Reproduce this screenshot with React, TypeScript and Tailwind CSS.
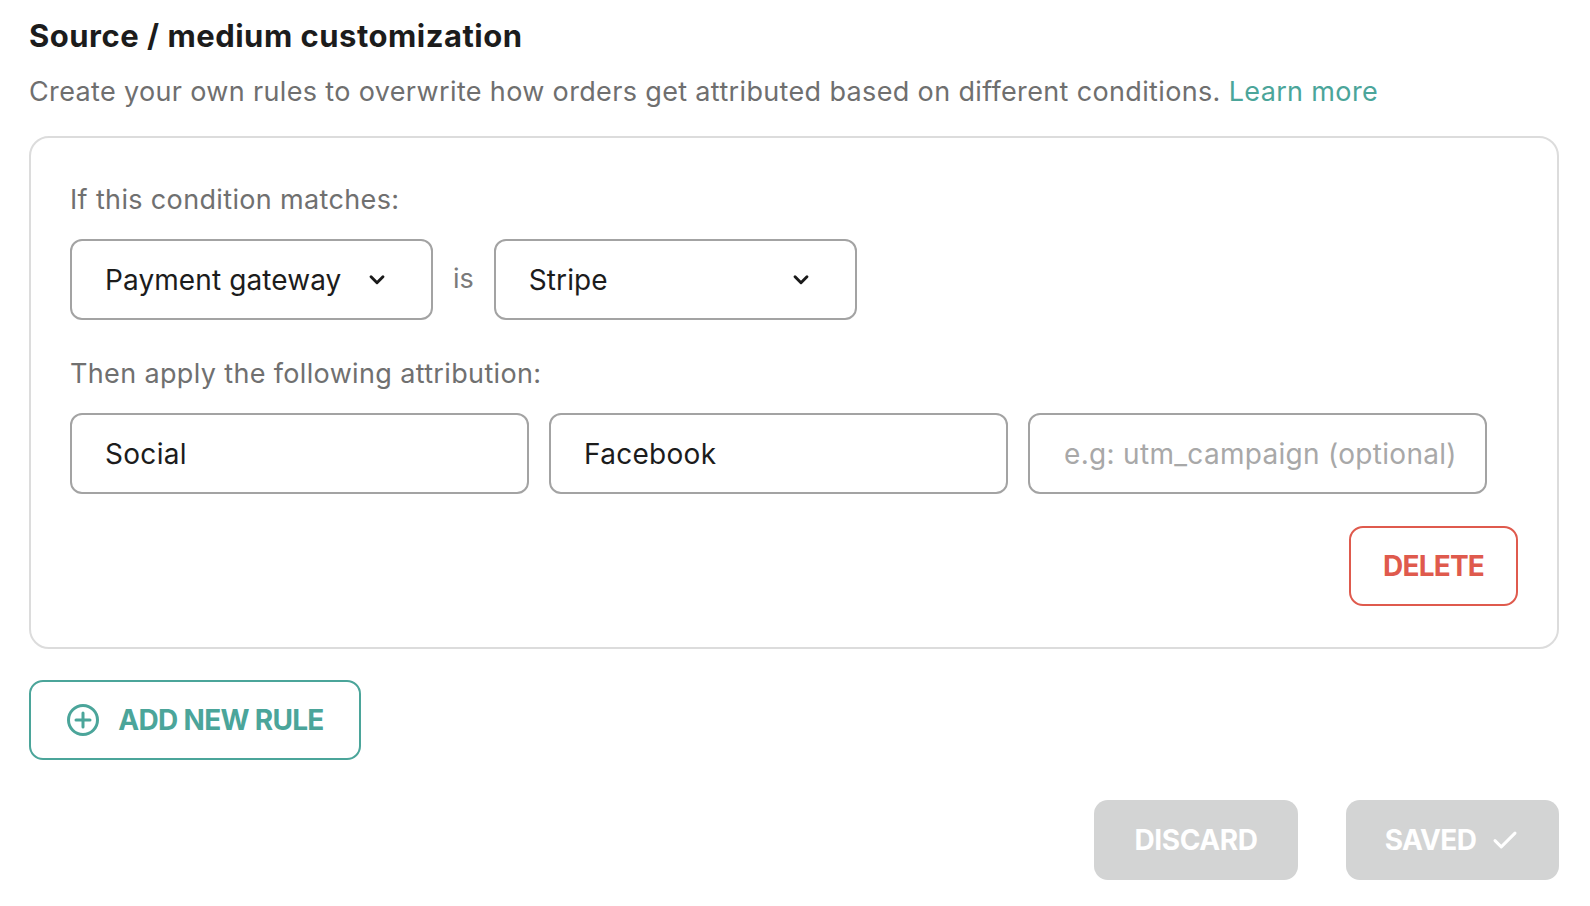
import React from "react";

const Chevron = () => (
  <svg width="22" height="22" viewBox="0 0 24 24" fill="none" stroke="#1a1a1a" strokeWidth="3.2" strokeLinecap="round" strokeLinejoin="round">
    <path d="M5.5 8.5l6.5 6.5 6.5-6.5" />
  </svg>
);

export default function App() {
  return (
    <div className="w-full bg-white text-[#1c1c1c] pl-[29px] pr-[31px] pt-[15px] pb-[20px]" style={{ fontFamily: "Inter, 'Noto Sans', sans-serif" }}>
      <h1 className="text-[31px] font-bold leading-[42px] tracking-[0.5px] text-[#1c1c1c]">Source / medium customization</h1>
      <p className="mt-[17px] text-[27px] leading-[36px] text-[#6f6f6f] tracking-[0.35px]">
        Create your own rules to overwrite how orders get attributed based on different conditions.{" "}
        <span className="text-[#4ba59a]">Learn more</span>
      </p>
      <div className="mt-[26px] border-2 border-[#dcdcdc] rounded-[20px] px-[39px] pt-[44px] pb-[41px]">
        <div className="text-[27px] leading-[36px] text-[#707070] tracking-[0.35px]">If this condition matches:</div>
        <div className="mt-[21px] flex items-center gap-[20px]">
          <div className="w-[363px] h-[81px] border-2 border-[#a3a3a3] rounded-[12px] flex items-center justify-between pl-[33px] pr-[43px]">
            <span className="text-[28px] tracking-[0.1px]">Payment gateway</span>
            <Chevron />
          </div>
          <span className="text-[27px] text-[#7a7a7a]">is</span>
          <div className="w-[363px] h-[81px] border-2 border-[#a3a3a3] rounded-[12px] flex items-center justify-between pl-[33px] pr-[43px]">
            <span className="text-[28px] tracking-[0.1px]">Stripe</span>
            <Chevron />
          </div>
        </div>
        <div className="mt-[36px] text-[27px] leading-[36px] text-[#707070] tracking-[0.35px]">Then apply the following attribution:</div>
        <div className="mt-[21px] grid grid-cols-3 gap-[20px] pr-[31px]">
          <div className="h-[81px] border-2 border-[#a3a3a3] rounded-[12px] flex items-center pl-[33px] text-[28px] tracking-[0.3px]">Social</div>
          <div className="h-[81px] border-2 border-[#a3a3a3] rounded-[12px] flex items-center pl-[33px] text-[28px] tracking-[0.3px]">Facebook</div>
          <div className="h-[81px] border-2 border-[#a3a3a3] rounded-[12px] flex items-center justify-center pl-[6px] whitespace-nowrap text-[28px] text-[#a8a8a8] tracking-[0.3px]">e.g: utm_campaign (optional)</div>
        </div>
        <div className="mt-[32px] flex justify-end">
          <button className="w-[169px] h-[80px] border-2 border-[#df5a4d] rounded-[14px] text-[#df5a4d] text-[28px] font-bold tracking-[-0.8px]">DELETE</button>
        </div>
      </div>
      <button className="mt-[31px] w-[332px] h-[80px] border-2 border-[#4ba59a] rounded-[14px] flex items-center justify-center gap-[18px] text-[#4ba59a] text-[28px] font-bold tracking-[-0.7px]">
        <svg width="34" height="34" viewBox="0 0 34 34" fill="none" stroke="#4ba59a" strokeWidth="3" strokeLinecap="round">
          <circle cx="17" cy="17" r="14.5" />
          <path d="M17 10v14M10 17h14" />
        </svg>
        ADD NEW RULE
      </button>
      <div className="mt-[40px] flex justify-end gap-[48px]">
        <button className="w-[204px] h-[80px] rounded-[14px] bg-[#d3d4d4] text-white text-[28px] font-bold tracking-[-0.4px]">DISCARD</button>
        <button className="w-[213px] h-[80px] rounded-[14px] bg-[#d3d4d4] text-white text-[28px] font-bold tracking-[-0.6px] flex items-center justify-center gap-[14px]">
          SAVED
          <svg width="30" height="30" viewBox="0 0 24 24" fill="none" stroke="white" strokeWidth="2.4" strokeLinecap="round" strokeLinejoin="round">
            <path d="M4 12.5l5 5L20 6.5" />
          </svg>
        </button>
      </div>
    </div>
  );
}
